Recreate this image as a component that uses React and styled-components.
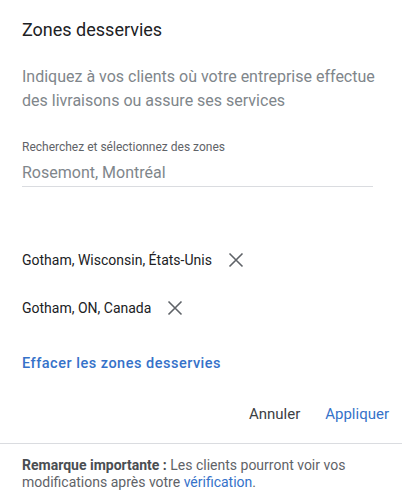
import React from 'react';
import styled, { createGlobalStyle } from 'styled-components';

const Global = createGlobalStyle`
  html, body {
    margin: 0;
    padding: 0;
    background: #fff;
    font-family: Roboto, "Liberation Sans", Arial, sans-serif;
  }
`;

const Panel = styled.div`
  width: 402px;
  height: 503px;
  overflow: hidden;
  display: flex;
  flex-direction: column;
`;

const Body = styled.div`
  padding: 18px 13px 0 22px;
`;

const Title = styled.h2`
  margin: 0;
  font-size: 18px;
  font-weight: 400;
  line-height: 24px;
  color: #202124;
`;

const Intro = styled.p`
  margin: 23px 0 0 0;
  width: 358px;
  font-size: 16px;
  line-height: 24px;
  color: #80868b;
`;

const Field = styled.div`
  margin-top: 27px;
  width: 351px;
  border-bottom: 1px solid #dadce0;
  padding-bottom: 2px;
`;

const Label = styled.div`
  font-size: 12px;
  line-height: 14px;
  color: #5f6368;
`;

const Value = styled.div`
  margin-top: 8px;
  font-size: 16px;
  line-height: 22px;
  color: #80868b;
`;

const Chips = styled.div`
  margin-top: 62px;
  display: flex;
  flex-direction: column;
  gap: 26px;
`;

const Chip = styled.div`
  display: flex;
  align-items: center;
  gap: 16px;
  height: 22px;
  font-size: 14px;
  color: #202124;
`;

const Remove = styled.button`
  border: none;
  background: none;
  padding: 0;
  width: 16px;
  height: 16px;
  display: flex;
  align-items: center;
  justify-content: center;
  cursor: pointer;
`;

const ClearLink = styled.a`
  display: block;
  margin-top: 35px;
  font-size: 14.5px;
  font-weight: 500;
  letter-spacing: 0.5px;
  color: #3572c9;
  line-height: 20px;
`;

const Actions = styled.div`
  margin-top: 30px;
  display: flex;
  justify-content: flex-end;
  gap: 25px;
`;

const ActionButton = styled.button`
  border: none;
  background: none;
  padding: 0;
  font-family: inherit;
  font-size: 15px;
  line-height: 20px;
  font-weight: 400;
  color: ${(p) => (p.$primary ? '#3572c9' : '#3c4043')};
  cursor: pointer;
`;

const Divider = styled.hr`
  margin: 19px 0 0 0;
  border: none;
  border-top: 1px solid #dadce0;
`;

const Note = styled.p`
  margin: 13px 22px 0 22px;
  font-size: 14px;
  line-height: 17px;
  color: #5f6368;
  b {
    font-weight: 700;
    color: #4a4e52;
  }
  a {
    color: #3572c9;
    text-decoration: none;
  }
`;

const CloseIcon = () => (
  <svg width="16" height="16" viewBox="0 0 16 16">
    <path d="M1.5 1.5 L14.5 14.5 M14.5 1.5 L1.5 14.5" stroke="#5f6368" strokeWidth="1.6" fill="none" />
  </svg>
);

const zones = ['Gotham, Wisconsin, États-Unis', 'Gotham, ON, Canada'];

export default function App() {
  return (
    <Panel>
      <Global />
      <Body>
        <Title>Zones desservies</Title>
        <Intro>
          Indiquez à vos clients où votre entreprise effectue des livraisons ou assure ses services
        </Intro>
        <Field>
          <Label>Recherchez et sélectionnez des zones</Label>
          <Value>Rosemont, Montréal</Value>
        </Field>
        <Chips>
          {zones.map((z) => (
            <Chip key={z}>
              {z}
              <Remove>
                <CloseIcon />
              </Remove>
            </Chip>
          ))}
        </Chips>
        <ClearLink>Effacer les zones desservies</ClearLink>
        <Actions>
          <ActionButton>Annuler</ActionButton>
          <ActionButton $primary>Appliquer</ActionButton>
        </Actions>
      </Body>
      <Divider />
      <Note>
        <b>Remarque importante :</b> Les clients pourront voir vos modifications après votre{' '}
        <a>vérification</a>.
      </Note>
    </Panel>
  );
}
